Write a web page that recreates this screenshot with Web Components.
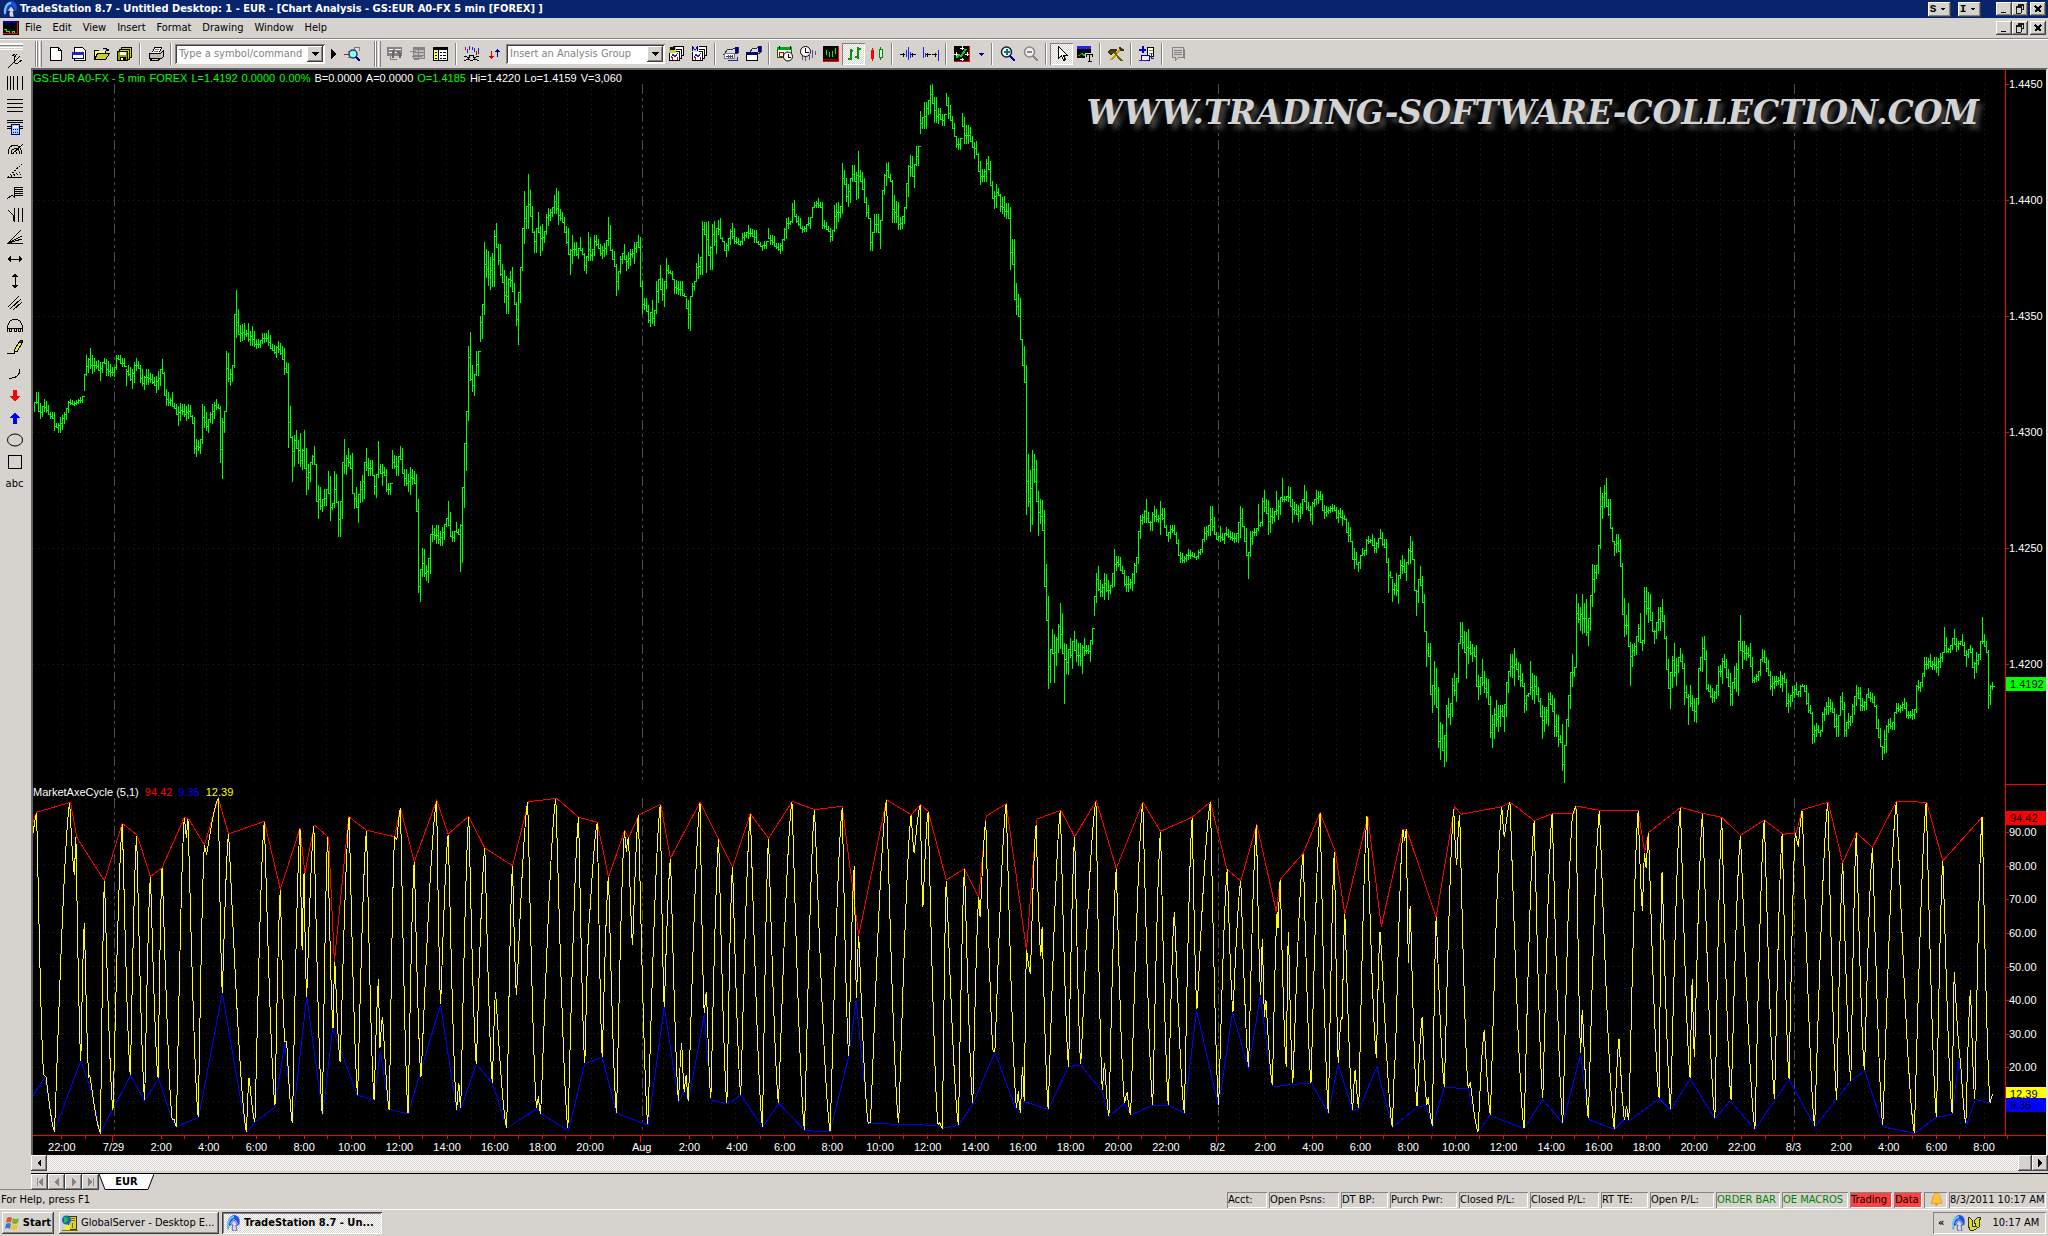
<!DOCTYPE html>
<html lang="en">
<head>
<meta charset="utf-8">
<title>TradeStation 8.7 - Untitled Desktop: 1 - EUR</title>
<style>
html,body{margin:0;height:100%;overflow:hidden;background:#d6d3ce}
body{font:11px/14px "DejaVu Sans Condensed","DejaVu Sans",sans-serif;color:#000}
</style>
</head>
<body>
<ts-desktop></ts-desktop>
<script>
const BASE=`
*{box-sizing:border-box}
button,input,select{font:inherit;color:inherit;margin:0;padding:0;border:0;border-radius:0;background:none;min-width:0;outline:0}
button{display:flex;align-items:center;justify-content:center;white-space:nowrap}
svg{display:block}
.raised{background:#d6d3ce;box-shadow:inset -1px -1px #424142,inset 1px 1px #fff,inset -2px -2px #848284}
.hatch{background:repeating-conic-gradient(#fff 0 25%,#d6d3ce 0 50%) 0 0/2px 2px}
`;
function define(tag,css,html,init){
  const t=document.createElement('template');
  customElements.define(tag,class extends HTMLElement{
    connectedCallback(){
      if(this.shadowRoot)return;
      t.innerHTML='<style>'+BASE+css+'</style>'+(typeof html==='function'?html(this):html);
      this.attachShadow({mode:'open'}).append(t.content.cloneNode(true));
      if(init)init(this,this.shadowRoot);
    }
  });
}

/* ---------- icons, 16 x 16 ---------- */
const P=(d,s='#000',f='none',w=1)=>`<path d="${d}" stroke="${s}" fill="${f}" stroke-width="${w}"/>`;
const R=(x,y,w,h,f)=>`<rect x="${x}" y="${y}" width="${w}" height="${h}" fill="${f}"/>`;
const tsLogo=`<g shape-rendering="auto"><path d="M3 15C1 9 3 1 9 0c5 0 7 5 5 11l-2-4-3-3-3 3z" fill="#1c50e8"/><path d="M3 13C2 7 5 2 9 2" stroke="#6cc8ff" fill="none" stroke-width="2"/><path d="M9 5l4 5h-2l1 6H8l-1-3 1-3H5z" fill="#cfd8f0" stroke="#102070" stroke-width=".6"/></g>`;
const cells=(x,y)=>R(x,y,11,10,'#fff')+P(`M${x+.5} ${y+.5}h10v9h-10z`);
const ICONS={
 logo:tsLogo,
 chart:R(0,1,16,14,'#000')+R(0,1,14,2,'#00c')+P('M1 9.500h2v2h3v2h3v-2h2v1','#0f0')+P('M14.500 2v11H0','#f00'),
 fresh:P('M2.500 1.500h8l3 3v10h-11z','#000','#fff')+P('M10.500 1.500v3h3'),
 window:P('M3.500 1.500h8l3 3v10h-11z','#000','#fff')+R(1,6,11,7,'#fff')+P('M1.500 6.500h11v6h-11z','#008')+R(1,6,12,3,'#22c'),
 open:P('M.5 13.500v-9h4l1 1h6v3')+R(1,5,10,8,'#ff6')+P('M.5 13.500l3-6h12l-4 6z','#000','#cc3')+P('M9 2.500h3l2 2m0-2v2h-2'),
 saveall:P('M4.500 1.500h10v10h-10z','#000','#cc3')+P('M2.500 3.500h10v10h-10z','#000','#cc3')+P('M.5 5.500h10v9h-10z','#000','#990')+R(3,6,6,3,'#fff')+R(3,11,6,4,'#000')+R(4,12,2,2,'#fff'),
 print:P('M4.500 6.500l2-5h7l-2 5','#000','#fff')+P('M1.500 7.500h12v5h-12z','#000','#bbb')+P('M13 7l2-2v6l-2 2M3.500 12.500h8l-1 2h-8z','#000','#ccc')+P('M7 3.500h4M6 5.500h4','#777')+R(10,10,2,1,'#cc0'),
 play:P('M6 3v10l5-5z','none','#000'),
 find:P('M0 8h3m1-3h6V1h5v4m-9 0h4v6H5z','#777','#ddd')+P('M0 8.500h5','#a22')+`<g shape-rendering="auto"><circle cx="9" cy="8" r="4" fill="#8ff" stroke="#245" stroke-width="1.500"/></g>`+P('M12 11l4 4','#008','none',2),
 g1:R(0,1,15,9,'#848284')+P('M2 3.500h4m2 0h6M2 6.500h4m2 0h4','#fff')+P('M6 4v8m4-6c4 0 3 3 3 6','#666','none',2)+P('M3.500 10v3h6','#848284'),
 g2:P('M3.500 1.500h11v11h-11z','#848284','#bbb')+R(4,1,11,3,'#848284')+P('M4 6.500h11M4 9.500h11M8.500 4v9','#848284')+P('M0 5.500h6M2 10.500h10M4 13.500h5','#848284'),
 grid:P('M.5 1.500h14v13H.5z','#000','#fff')+R(0,1,15,3,'#000')+R(1,4,4,10,'#ff6')+P('M5.500 4v10M10 6.500h3M7 6.500h2M10 9.500h3M7 9.500h2M7 12.500h2M10 12.500h3M2 6.500h2M2 9.500h2M2 12.500h2'),
 study:P('M1.500 1v3M12.500 5v4','#c00')+P('M3.500 3v4M5.500 0v4M8.500 1v3M10.500 2v4M14.500 2v6','#22c')+P('M0 14.500l4-1 2-4h3l2 4 4 1M0 10l3 1 3 3h3l3-3 3-1'),
 updown:P('M4.500 5v8M2 10.500h5M3 11.500h3','#c00')+P('M10.500 3v8M8 5.500h5M9 4.500h3','#008'),
 grp1:cells(4,0)+cells(2,3)+cells(0,5)+R(0,1,7,6,'#cc3')+R(1,1,5,3,'#000')+P('M2 12l2-4 2 3 3-4','#22c')+P('M3.500 11v3M8.500 11v3','#c00'),
 grp2:cells(4,0)+cells(2,3)+cells(0,5)+R(0,0,7,6,'#d6d3ce')+P('M.5 5V1l2.500 3L5.500 1v4','#008')+P('M2 12l2-4 2 3 3-4','#22c')+P('M3.500 11v3M8.500 11v3','#c00'),
 fmt1:P('M1 8l4-5h5l5-1v5l-4 1H3z','#333','#ddd')+P('M13.500 1v6','#008','none',3)+P('M1.500 7.500h10v5h-10z','#777','#fff')+P('M3 10.500h6m-4 4h9v-4','#22a')+P('M5 12V9m2 3V9m2 3V9','#555'),
 fmt2:P('M4 6l3-4h4l4-1v5l-3 2H5z','#333','#ddd')+P('M13.500 0v6','#008','none',3)+P('M.5 6.500h11v8H.5z','#000','#fff')+R(0,6,12,3,'#008'),
 time1:P('M.5 1.500h14v10H.5z','#060','#fff')+R(0,1,15,3,'#0a0')+P('M2 6h4v4H2z','#c00')+`<g shape-rendering="auto"><circle cx="11" cy="10.500" r="4.500" fill="#fff" stroke="#000"/></g>`+P('M11 8v3h3M2 0v3M13 0v3'),
 time2:`<g shape-rendering="auto"><circle cx="5.500" cy="5.500" r="5" fill="#fff" stroke="#000"/></g>`+P('M5.500 2v4h3')+P('M2.500 10v4M5.500 11v4M9.500 8v6M12.500 4v8M15.500 5v4','#558','none',1),
 bars:R(0,0,16,16,'#000')+P('M3.500 4v5M6.500 6v5M9.500 5v6M12.500 2v6','#0f0')+P('M15.500 0v15.500H0','#f00','none')+P('M0 13.500h14','#a00'),
 ohlc:P('M4.500 3v11M2 12.500h3M4 4.500h3M11.500 1v12M9 10.500h3M12 2.500h3','#090','none',2),
 candle:R(2,4,3,9,'#f00')+P('M3.500 2v13','#f00')+P('M11.500 1v13','#080')+P('M10.500 3.500h3v8h-3z','#080','#dfd'),
 narrow:P('M8.500 1v13M10.500 6v6','#22e')+P('M6.500 4v7','#22e')+P('M0 8.500h5M3.500 6.500v4M11 8.500h5M12.500 6.500v4'),
 wide:P('M.5 1v11M15.500 4v11','#22e')+P('M3 8.500h5M4.500 6.500v4M9 8.500h5M12.500 6.500v4')+P('M2.500 7v4','#22e'),
 fit:R(0,0,16,16,'#000')+P('M2 12l3-3 2 1 5-7','#0d0','none',2)+P('M8 0v4M6 2.500h4M8 12v4M6 13.500h4M0 8h4M2.500 6v4M11 8h4M13.500 6v4','#fff')+P('M15.500 0v15.500H0','#f00'),
 drop:P('M2 6h12l-6 6z','none','#008'),
 zin:`<g shape-rendering="auto"><circle cx="6.500" cy="6" r="5" fill="#fff" stroke="#123" stroke-width="1.500"/></g>`+P('M6.500 3v6M3.500 6h6','#077','none',2)+P('M10 10l5 5','#008','none',2),
 zout:`<g shape-rendering="auto"><circle cx="6.500" cy="6" r="5" fill="#eee" stroke="#888" stroke-width="1.500"/></g>`+P('M4 6h5','#888','none',2)+P('M10 10l5 5','#888','none',2),
 ptr:P('M4.500 .5v12l3-3 2 5 2-1-2-4h4z','#000','#fff'),
 ttool:R(0,0,14,12,'#000')+R(0,0,14,3,'#22f')+P('M1 9h2l2-2 2 3 2-3h2','#0c0')+R(8,7,8,9,'#d6d3ce')+P('M9 8.500h7M9 8v3M15.500 8v3M12.500 8v7M11 15h4','#000'),
 hammer:P('M3 14L14 2','#c90','none',2)+P('M5 5l9 10','#660','none',2)+P('M0 6l3-3h4l2 1-3 2-3 3z','#330','#441')+P('M12 1l1 3h3','#333','none',2),
 wiz:P('M3.500 0v7M0 3.500h7','#00c','none',2)+P('M8.500 1.500h6v9h-6z','#000','#fff')+P('M10 4.500h4m-4 3h4','#990')+P('M2.500 9.500h8v5h-8z','#008','#eef')+P('M0 14.500h8M12 7v5h3','#22a'),
 note:P('M2.500 1.500h11v10h-5l-3 3v-3h-3z','#848284','#ccc')+P('M4 4.500h8M4 6.500h8M4 8.500h8M14.500 3v10','#848284'),
 fork:P('M1 15l6-6M9.500 1L7 5v3l1 2h3l4-3M5 3l3-2M13 3L7 9'),
 vlines:P('M.5 1v14M3.500 1v14M6.500 1v14M10.500 1v14M15.500 1v14'),
 hlines:P('M0 2.500h16M0 6.500h16M0 10.500h16M0 14.500h16'),
 calc:P('M0 1.500h16M0 3.500h16M0 7.500h16M0 9.500h16')+P('M4.500 5.500h8v10h-8z','#006','#a8d0ff')+R(6,7,5,2,'#fff')+R(6,10,1,1,'#008')+R(8,10,1,1,'#008')+R(10,10,1,1,'#008')+R(6,13,1,1,'#008')+R(8,13,1,1,'#008')+R(10,13,1,1,'#008'),
 arcs:P('M1 13c0-12 13-12 14 0M4 13c0-7 8-7 9 0M6 13c0-3 4-3 4 0M5 13L16 3'),
 fan:P('M0 14.500h15')+`<path d="M1 14L15 1M1 14L15 8M1 14l14-3" stroke="#000" stroke-dasharray="1.500 1.500" fill="none"/>`,
 fib:P('M0 14l5-4 2 2V2M8 2.500h8M8 4.500h8M8 6.500h8M8 8.500h8M8 10.500h8'),
 vfib:P('M1 3l5 5v6M7.500 1v14M11.500 1v14M15.500 1v14'),
 speed:P('M1 14L14 1M1 14L15 7M1 14l14-4M0 14.500h16'),
 hor:P('M2 8h12')+P('M0 8l4-3v6zM16 8l-4-3v6z','none','#000'),
 ver:P('M8 2v12')+P('M8 0L5 4h6zM8 16l-3-4h6z','none','#000'),
 par:P('M1 12L12 1M3 14L14 4M6 15L15 7'),
 cyc:P('M.5 15v-4C1 -1 15 -1 15.500 11v4M.5 11.500h15M2.500 12v2h2v-2M7 12v2h2v-2M11.500 12v2h2v-2'),
 pen:P('M0 14.500h7l1-3')+P('M7 12L12 3l3 1-5 9z','#000','#ee3')+P('M12 3l2-2 2 1-1 2z','#000','#b22'),
 arc:P('M2 12c7 1 11-3 11-9'),
 down:P('M6 2h4v6h3l-5 6-5-6h3z','none','#f00'),
 up:P('M6 14h4V8h3L8 2 3 8h3z','none','#00f'),
 oval:`<g shape-rendering="auto"><ellipse cx="8" cy="8" rx="7.500" ry="6" fill="none" stroke="#000"/></g>`,
 rect:P('M1.500 1.500h13v13h-13z'),
 flag:`<g shape-rendering="auto"><path d="M2 3q3-2 5 0L6 8Q3 6 1 8z" fill="#e5532d"/><path d="M8 3q3 2 6 0l-1 5q-3 2-6 0z" fill="#6fb33b"/><path d="M1 9q3-2 5 0l-1 5q-3-2-5 0z" fill="#3a75d6"/><path d="M7 9q3 2 6 0l-1 5q-3 2-6 0z" fill="#f4c52b"/></g>`,
 server:P('M6.500 1.500h8v13h-8z','#330','#dc3')+P('M8 3.500h5M8 5.500h5M10 8v5','#770')+`<g shape-rendering="auto"><circle cx="4.500" cy="5" r="4.500" fill="#1663c8"/><path d="M2 2l4 1-1 4-3 1z" fill="#1c2"/></g>`+R(3,10,5,5,'#ee3')+P('M0 15.500h16','#770'),
 bell:`<g shape-rendering="auto"><path d="M8 1c5 1 4 7 6 11H2C5 8 3 2 8 1z" fill="#ffc43a" stroke="#d98a10" stroke-width=".7"/><circle cx="8" cy="13.500" r="1.500" fill="#e09a20"/></g>`,
 snake:P('M2 2l3 3v6h4l-2-5 4-4 3 1-2 3v6l-5 3H3l-2-5z','#332','#dd2'),
 left:P('M10 4v8L6 8z','none','#000'),right:P('M6 4v8l4-4z','none','#000'),caret:P('M4 6h8l-4 4z','none','#000'),
 nfirst:P('M5.500 3v9','#848284')+P('M11 3v10L6 8z','none','#848284'),nprev:P('M10 3v10L5 8z','none','#848284'),
 nnext:P('M6 3v10l5-5z','none','#848284'),nlast:P('M10.500 3v9','#848284')+P('M5 3v10l5-5z','none','#848284'),
 min:R(4,11,6,2,'#000'),restore:P('M6 3.500h7M6.500 3v3M12.500 3v6M10 8.500h3M3 6.500h7M3.500 6v7h6V6','#000')+P('M6 2.500h7M3 5.500h7'),close:P('M4 4l8 8M12 4l-8 8','#000','none',2)
};
const svg=(n,s=16)=>`<svg width="${s}" height="${s}" viewBox="0 0 16 16" shape-rendering="crispEdges" aria-hidden="true">${ICONS[n]}</svg>`;

define('ts-icon',':host{display:block;flex:none}',el=>svg(el.getAttribute('name'),el.getAttribute('size')||16));

define('tool-button',`
:host{display:block;flex:none;width:23px}
:host([slim]){width:15px}
button{width:100%;height:22px;overflow:hidden}
:host([on]) button{box-shadow:inset 1px 1px #848284,inset -1px -1px #fff}
svg{flex:none}`,
 el=>`<button class="${el.hasAttribute('on')?'hatch':''}" aria-label="${el.getAttribute('label')||el.getAttribute('icon')}">${svg(el.getAttribute('icon'),el.getAttribute('icon')==='drop'?8:16)}</button>`);

define('win-buttons',`
:host{display:flex;gap:2px}
div{display:flex}
button{width:16px;height:14px}`,
`<div><button class="raised" aria-label="Minimize">${svg('min',14)}</button><button class="raised" aria-label="Restore">${svg('restore',14)}</button></div><button class="raised" aria-label="Close">${svg('close',12)}</button>`);

define('title-bar',`
:host{display:flex;align-items:center;height:18px;padding:0 2px;background:#08246b;color:#fff;font-weight:bold}
h1{font:inherit;margin:0 auto 0 2px;white-space:nowrap}
.drops{display:flex;gap:7px;margin-right:15px}
.drops button{width:23px;height:15px;color:#000;font:bold 11px "Liberation Mono",monospace;gap:1px}`,
`<ts-icon name="logo"></ts-icon><h1>TradeStation 8.7 - Untitled Desktop: 1 - EUR - [Chart Analysis - GS:EUR A0-FX 5 min [FOREX] ]</h1>
<div class="drops"><button class="raised" aria-label="S menu">S${svg('caret',12)}</button><button class="raised" aria-label="I menu">I${svg('caret',12)}</button></div><win-buttons></win-buttons>`);

define('menu-bar',`
:host{display:flex;align-items:center;height:22px;padding:0 2px 2px 3px;border-bottom:1px solid #fff;box-shadow:inset 0 -1px #848284}
nav{display:flex;gap:11px;margin:0 auto 0 6px}`,
`<ts-icon name="chart"></ts-icon><nav>${['File','Edit','View','Insert','Format','Drawing','Window','Help'].map(m=>`<button>${m}</button>`).join('')}</nav><win-buttons></win-buttons>`);

const sep='<i class="sep"></i>',B=(n,x='')=>`<tool-button icon="${n}" ${x}></tool-button>`;
define('tool-bar',`
:host{display:flex;align-items:center;height:28px;padding-left:3px}
.grip{width:7px;height:26px;flex:none;margin:0 2px 0 1px;border:solid;border-width:0 1px;border-color:#fff #848284;background:linear-gradient(90deg,#fff 1px,#848284 1px 2px,transparent 2px 3px,#fff 3px 4px,transparent 4px)}
.sep{flex:none;width:2px;height:22px;margin:0 3px;background:linear-gradient(90deg,#848284 1px,#fff 1px)}
.combo{display:flex;height:20px;background:#fff;box-shadow:inset 1px 1px #848284,inset -1px -1px #fff,inset 2px 2px #424142;padding:2px}
.combo{flex:0 0 150px}.combo.w{flex-basis:159px}
input,select{flex:1;width:0;padding-left:2px;color:#848284;appearance:none;white-space:nowrap}
input::placeholder{color:#848284;opacity:1}
.combo button,.combo .arrow{flex:0 0 16px;display:flex;align-items:center;justify-content:center}
.gap{width:10px}`,
`<i class="grip"></i>${B('fresh')}${B('window')}${B('open')}${B('saveall')}${sep}${B('print')}${sep}
<label class="combo"><input aria-label="Symbol or command" placeholder="Type a symbol/command"><button class="raised" aria-label="Open list">${svg('caret')}</button></label>
${B('play','slim')}${B('find')}<i class="gap"></i><i class="grip"></i>${B('g1')}${B('g2')}${B('grid')}${sep}${B('study')}${B('updown')}
<label class="combo w"><select aria-label="Analysis group"><option>Insert an Analysis Group</option></select><span class="arrow raised">${svg('caret')}</span></label>
${B('grp1')}${B('grp2')}${sep}${B('fmt1')}${B('fmt2')}${sep}${B('time1')}${B('time2')}${B('bars')}${B('ohlc','on')}${B('candle')}${sep}${B('narrow')}${B('wide')}${sep}${B('fit')}${B('drop','slim')}${sep}${B('zin')}${B('zout')}${sep}${B('ptr','on')}${B('ttool')}${sep}${B('hammer')}${sep}${B('wiz')}${sep}${B('note')}`);

define('draw-rail',`
:host{display:flex;flex-direction:column;align-items:flex-start;width:31px;flex:none;padding-top:3px;border-bottom:1px solid #848284}
.grip{width:23px;height:7px;flex:none;border:solid;border-width:1px 0;border-color:#fff #848284;background:linear-gradient(#fff 1px,#848284 1px 2px,transparent 2px 3px,#fff 3px 4px,transparent 4px)}
tool-button{margin-left:3px}
.arc{margin-top:5px}
.abc{width:23px;height:22px;margin-left:3px}`,
`<i class="grip"></i>${['fork','vlines','hlines','calc','arcs','fan','fib','vfib','speed','hor','ver','par','cyc','pen'].map(n=>B(n)).join('')}${B('arc','class="arc"')}${['down','up','oval','rect'].map(n=>B(n)).join('')}<button class="abc">abc</button>`);

/* ---------- chart data: [origin x, x per unit, origin y, y per unit, samples] ---------- */
const PRICE=[
[30,2.376,60,2.8,`11 957 985 15 930 962 19 930 985 25 960 1005 30 968 1000 35 948 985 44 965 995 50 985 1005 58 985 1040 63 1015 1030 68 1015 1043 73 1000 1043 82 985 1020 91 955 988 96 948 965 106 955 970 112 948 962 122 942 960 129 880 928 134 827 885 139 835 875 144 805 865 149 825 880 155 842 865 163 840 870 168 845 900 172 845 875 178 835 850 182 838 885 191 850 887 197 860 885 201 860 887 206 827 868 211 827 840 216 827 850 221 835 860 226 850 895 229 865 912 234 855 885 243 865 920 249 845 905 253 835 870 258 842 865 263 855 905 272 885 925 278 865 910 287 875 905 296 887 912 301 885 932 306 870 925 310 865 912 315 838 880 320 873 940 325 920 970 333 945 970 338 930 972 343 960 978 350 965 1005 353 970 1025 358 960 1010 363 962 995 372 970 1012 377 962 1005 382 965 1000 387 995 1018 391 1000 1102 396 1060 1112 401 1065 1095 405 1060 1102 410 962 1075 415 970 1030 420 985 1038 425 1005 1043 429 985 1015 434 962 1018 443 948 980 449 962 978 453 968 1128 457 1002 1172 462 982 1045 467 815 985 472 820 902 476 865 912 481 855 902 486 710 862 490 643 778 495 697 770 500 742 790 509 735 785 514 755 775 519 735 790 524 760 800 529 745 800 538 780 808 548 785 805 553 765 795 562 765 790 567 755 800 571 770 808 577 795 815 585 800 835 591 787 820 600 800 840 605 805 882 610 845 875 614 847 1085 619 968 1058 623 1053 1182 628 1050 1140 633 1035 1090 638 1065 1130 643 1045 1140 648 1090 1148 652 1035 1145 657 1085 1218 662 1130 1205 667 1125 1182 672 1105 1135 676 1080 1135 681 1130 1237 686 1190 1285 691 1195 1260 696 1230 1265 701 1200 1250 709 1150 1215 714 1165 1290 719 1240 1260 724 1150 1255 729 1158 1240 733 1235 1335 738 1235 1335 743 1125 1285 747 1060 1160 752 1105 1162 757 1085 1140 761 1105 1145 766 1100 1215 771 1215 1258 776 1195 1255 780 1215 1295 786 1180 1240 795 1125 1230 800 1085 1150 805 1115 1165 810 1120 1165 818 1165 1218 823 1160 1225 828 1067 1170 833 1130 1160 838 1130 1192 843 1140 1165 848 1145 1210 853 1185 1218 858 1140 1195 862 1092 1145 867 1105 1145 872 1110 1165 877 1105 1150 881 1080 1120 886 1085 1160 891 1145 1192 896 1160 1210 905 1140 1218 910 1145 1190 914 1150 1188 919 1160 1265 923 1230 1492 928 1425 1518 933 1365 1448 938 1370 1448 943 1415 1460 948 1395 1465 952 1328 1440 957 1302 1350 962 1310 1345 967 1302 1355 972 1320 1360 977 1308 1360 982 1300 1345 987 1283 1308 991 1275 1308 994 1235 1305 999 1265 1335 1005 1320 1350 1010 1302 1355 1014 1293 1325 1019 1313 1330 1023 1300 1433 1028 1195 1408 1033 1072 1255 1038 982 1150 1043 800 1010 1047 762 900 1051 855 930 1056 880 940 1062 815 885 1067 782 842 1071 717 790 1076 682 782 1080 510 715 1085 530 610 1090 535 632 1095 552 645 1099 540 635 1104 475 635 1108 455 525 1113 515 575 1118 515 605 1123 570 625 1127 588 680 1133 605 712 1138 610 712 1142 590 635 1147 580 650 1152 625 685 1157 678 745 1160 650 797 1166 580 680 1170 470 590 1175 367 515 1180 410 472 1185 318 472 1190 365 440 1195 408 485 1199 480 540 1204 470 540 1208 425 485 1213 465 550 1218 460 535 1223 480 512 1228 430 490 1232 415 465 1237 417 450 1242 412 440 1247 378 430 1251 357 430 1256 367 463 1261 417 450 1266 425 455 1271 440 485 1276 465 515 1280 470 545 1285 530 602 1289 490 570 1295 510 550 1300 525 557 1305 495 535 1310 525 545 1315 540 590 1320 548 600 1325 482 562 1330 495 562 1335 530 562 1341 490 550 1346 490 520 1351 500 530 1356 515 550 1361 520 558 1367 505 545 1375 440 520 1380 462 535 1385 530 560 1390 535 580 1394 570 660 1398 590 645 1403 548 600 1408 540 570 1413 515 560 1418 545 590 1424 528 577 1428 530 555 1433 530 555 1437 510 570 1442 510 540 1447 490 525 1451 495 635 1455 620 712 1460 665 700 1465 665 705 1470 685 735 1475 705 748 1479 672 740 1484 700 745 1488 620 712 1493 612 680 1498 575 645 1503 610 675 1508 618 692 1512 555 640 1517 575 600 1522 588 600 1527 590 615 1532 615 655 1537 615 655 1542 620 658`],
[680,2.376,60,2.376,`0 525 560 5 525 560 10 553 562 15 565 592 20 570 640 25 560 643 30 530 562 35 525 548 39 482 525 44 460 520 49 468 510 54 382 510 58 385 415 63 385 505 67 382 465 72 442 498 77 390 500 82 382 442 87 400 460 91 380 415 96 375 425 101 420 432 106 430 455 110 435 467 115 422 455 120 402 440 125 388 425 130 398 438 135 420 438 143 430 442 149 410 440 155 408 422 162 392 425 168 400 420 173 402 420 178 405 435 187 430 440 197 440 455 202 430 450 210 400 425 216 415 440 222 418 445 228 435 450 238 435 460 244 425 455 249 400 430 254 375 425 258 372 402 263 382 392 268 340 388 270 333 372 276 365 388 282 370 395 287 375 402 292 395 410 301 390 408 306 372 395 311 372 402 316 350 375 320 338 352 329 328 352 335 338 352 339 338 402 344 380 402 353 395 408 359 400 432 363 405 430 367 345 408 372 340 402 377 338 385 382 348 375 386 245 365 391 262 298 396 280 338 401 295 350 405 280 340 410 250 290 415 250 290 420 265 333 425 217 330 430 262 290 434 265 310 439 280 340 444 325 372 449 345 378 453 375 455 458 408 455 463 365 412 468 365 410 473 370 408 477 380 450 481 310 380 487 270 320 491 245 300 495 242 280 500 270 290 505 285 388 510 320 388 515 335 388 520 338 405 525 372 405 529 370 402 534 350 390 539 292 355 544 250 325 548 225 278 553 228 278 558 248 305 563 205 252 568 158 212 572 120 175 577 135 165 582 100 165 587 95 130 592 60 128 597 58 105 601 98 108 606 88 150 611 90 120 615 115 152 620 115 142 625 128 158 630 88 158 634 78 110 638 88 140 643 108 145 648 132 165 653 150 182 658 180 208 663 185 213 668 160 185 672 125 160 677 135 200 682 155 200 687 160 195 692 180 208 697 195 235 701 205 235 705 192 225 710 222 265 715 240 298 720 258 290 725 235 290 730 228 262 735 240 300 739 288 330 744 312 355 749 295 352 754 305 322 759 318 362 763 325 365 768 322 372 772 338 385 777 340 378 782 342 372 785 350 500 790 425 488 795 425 570 800 530 605 805 555 610 810 565 665 814 665 727 819 680 768 824 725 1082 829 935 1062 834 975 1122 838 927 1105 843 935 1005 848 950 1050 853 1025 1132 857 1042 1102 862 1045 1118 866 1070 1252 871 1197 1332 875 1273 1495 880 1400 1480 886 1352 1412 891 1365 1480 895 1370 1440 900 1340 1410 905 1290 1400 909 1313 1412 914 1385 1530 919 1388 1460 923 1400 1462 928 1373 1420 933 1380 1447 938 1357 1405 943 1375 1430 948 1385 1440 953 1405 1452 957 1390 1458 962 1373 1415 967 1390 1412 972 1378 1430 977 1350 1390 981 1290 1362 986 1273 1320 990 1218 1290 994 1202 1262 999 1235 1275 1004 1245 1275 1009 1218 1282 1014 1222 1265 1019 1235 1282 1024 1248 1268 1028 1218 1255 1033 1163 1252 1038 1178 1215 1042 1178 1205 1047 1180 1215 1052 1202 1222 1056 1212 1250 1062 1225 1265 1067 1232 1258 1072 1218 1262 1077 1228 1260 1080 1195 1245 1085 1180 1218 1090 1120 1198 1094 1080 1138 1099 1078 1105 1104 1070 1100 1108 1042 1100 1113 1075 1100 1118 1095 1118 1123 1073 1118 1128 1060 1098 1137 1080 1100 1141 1047 1128 1146 1065 1092 1151 1065 1112 1156 1105 1132 1161 1122 1145 1166 1105 1138 1170 1105 1125 1175 1105 1128 1180 1122 1150 1185 1138 1178 1190 1170 1195 1199 1178 1195 1208 1163 1188 1218 1168 1180 1227 1178 1188 1232 1165 1185 1237 1162 1175 1242 1138 1172 1247 1110 1145 1255 1105 1130 1260 1060 1130 1265 1060 1120 1270 1085 1128 1275 1122 1140 1280 1130 1142 1285 1108 1145 1290 1125 1142 1294 1125 1150 1299 1110 1132 1308 1120 1140 1318 1125 1148 1323 1125 1145 1328 1098 1148 1333 1060 1135 1337 1065 1110 1342 1108 1145 1346 1112 1178 1351 1168 1232 1356 1120 1180 1361 1118 1152 1366 1112 1132 1375 1055 1120 1380 1098 1110 1384 1040 1108 1389 1022 1075 1394 1042 1078 1399 1045 1128 1404 1065 1125 1409 1065 1102 1413 1072 1098 1418 1025 1080 1423 1045 1092 1428 1038 1082 1432 993 1050 1437 1035 1050 1442 1037 1048 1446 1013 1050 1451 1015 1062 1456 1042 1100 1461 1050 1080 1466 1055 1080 1470 1058 1098 1475 1052 1090 1480 1042 1078 1484 1010 1050 1489 1025 1070 1494 1050 1072 1499 1060 1095 1503 1050 1105 1508 1042 1062 1513 1022 1058 1522 1025 1045 1527 1032 1072 1532 1058 1090 1541 1062 1078 1550 1055 1075 1556 1058 1072 1560 1062 1090 1565 1070 1100`],
[1300,2.096,440,3,`85 205 235 89 210 258 93 225 240 97 235 278 101 245 305 105 262 305 110 303 360 114 325 388 118 335 375 122 365 395 127 345 388 131 325 348 135 330 348 139 297 345 144 288 312 148 297 310 152 282 318 156 295 338 160 305 338 165 295 325 169 267 297 173 277 318 177 297 325 181 297 368 185 355 460 190 392 415 194 418 485 198 430 465 202 398 468 206 405 492 211 360 418 215 345 403 219 358 400 223 365 423 227 325 375 232 288 372 236 302 360 240 358 452 244 450 528 249 418 490 253 378 438 257 408 490 261 462 575 265 572 680 269 610 652 274 610 765 278 735 818 282 662 795 286 683 805 290 742 925 294 845 960 299 852 932 303 885 980 307 795 965 312 775 835 316 788 855 320 715 832 324 698 768 328 715 785 332 608 730 336 545 612 341 545 628 345 572 640 349 575 718 353 567 672 357 602 645 362 612 665 366 620 650 370 615 740 374 705 780 379 710 765 383 657 738 387 692 758 391 715 775 395 718 795 399 768 895 403 825 925 407 805 898 412 780 862 416 795 875 420 795 862 425 795 830 429 792 875 433 725 832 437 692 760 441 642 710 445 642 715 450 623 738 454 655 690 458 665 720 463 672 740 467 698 740 471 730 818 475 765 812 479 758 772 483 662 765 487 700 780 492 705 792 496 708 765 500 740 785 504 775 830 508 795 897 513 802 875 517 802 852 521 758 858 525 755 795 530 765 815 534 775 890 538 822 892 542 825 922 546 885 910 550 852 992 554 915 1028 559 838 918 563 765 862 568 695 808 572 642 740 576 680 712 580 462 683 584 490 550 588 502 572 593 462 582 597 490 578 601 477 588 605 535 618 609 465 572 613 372 500 617 375 460 622 375 418 626 315 402 630 140 328 634 160 238 638 135 205 642 113 200 647 177 228 651 177 268 655 262 305 659 302 348 663 282 340 668 282 335 672 297 382 676 370 525 680 475 590 684 525 585 688 488 620 693 605 738 697 612 682 701 610 648 705 587 645 709 552 605 714 518 608 718 600 632 722 440 612 726 440 525 731 455 548 735 462 542 739 515 575 743 570 612 747 545 598 752 502 572 756 500 572 760 477 545 764 525 598 768 588 690 773 658 748 777 695 808 781 648 745 785 608 712 789 655 738 794 652 700 798 623 665 802 642 688 806 670 795 810 735 775 814 762 855 818 735 800 823 765 812 827 775 845 831 775 850 835 685 795 839 650 692 844 592 695 848 587 660 852 630 750 856 732 755 860 735 775 865 745 788 869 752 785 873 735 778 877 678 768 881 675 712 886 655 732 890 642 685 894 658 715 898 688 740 902 698 798 906 725 798 911 678 748 915 668 755 919 602 768 923 525 632 928 602 688 932 602 660 936 615 662 940 622 655 944 608 682 949 652 728 953 710 730 957 702 725 961 692 722 965 658 708 969 628 665 974 630 668 978 650 695 982 660 708 986 692 750 990 708 768 995 708 748 999 708 738 1003 712 735 1007 692 745 1011 705 755 1015 700 728 1020 718 800 1024 760 818 1028 765 800 1032 738 785 1036 735 775 1041 725 765 1045 752 772 1049 735 772 1053 732 742 1057 735 755 1062 735 795 1066 758 820 1070 795 822 1074 815 912 1079 855 908 1083 850 890 1087 855 880 1091 870 892 1095 815 875 1100 800 842 1104 785 825 1108 772 825 1112 778 815 1116 785 820 1121 805 865 1125 822 890 1129 825 892 1133 768 828 1137 755 810 1141 785 890 1146 845 890 1150 818 868 1154 828 858 1158 792 850 1162 768 825 1166 735 798 1171 742 778 1175 742 812 1179 775 812 1183 782 812 1187 762 810 1191 745 775 1196 755 785 1200 758 790 1204 767 800 1208 795 868 1212 838 895 1216 865 922 1221 920 960 1225 870 942 1229 855 938 1233 838 878 1238 835 868 1242 845 870 1246 815 870 1250 790 822 1254 790 815 1259 795 820 1263 785 812 1267 775 808 1271 785 835 1275 812 838 1279 812 835 1284 808 840 1288 808 838 1292 735 820 1296 720 752 1301 725 755 1305 700 742 1309 652 710 1313 650 690 1317 655 688 1321 642 680 1326 662 690 1330 650 690 1334 652 698 1338 655 708 1342 640 685 1347 635 665 1351 560 640 1355 592 640 1359 625 640 1363 615 640 1367 595 630 1372 567 615 1376 595 635 1380 602 630 1385 602 615 1389 582 618 1393 605 648 1397 630 680 1401 628 655 1406 615 640 1410 625 685 1414 665 718 1418 635 698 1422 642 675 1426 602 660 1431 530 612 1435 582 620 1439 602 640 1443 630 808 1447 735 795 1451 725 750`]];
const LINES={
upper:[
[0,2.24,`74 125 82 97 158 67 172 172 234 303 274 130 307 165 337 290 363 263 413 112 423 118 458 195 489 55 512 162 592 124 628 328 672 145 683 280 704 135 736 172 749 545 781 110 821 151 884 170 897 83 928 245 978 61 1004 162 1050 109 1086 204 1148 257 1184 65 1247 55 1296 112 1338 127 1363 292 1399 152 1408 173 1432 104 1480 73 1502 235`],
[700,2.306,`0 67 43 178 75 262 116 101 158 175 213 64 264 89 328 79 366 467 430 59 487 104 508 74 526 94 568 300 610 266 643 352 660 108 706 71 753 510 776 118 832 91 864 170 914 62 960 266 1021 67 1062 154 1135 112 1177 65 1215 268 1247 303 1284 133 1329 395 1338 298 1391 220 1430 98 1465 215 1487 403 1540 108`],
[1380,2.347,`3 440 54 148 63 150 132 412 175 80 190 103 286 80 306 67 362 122 405 101 455 101 460 78 515 91 606 92 621 215 630 158 706 82 757 100 802 112 846 166 902 120 946 163 977 158 991 89 1052 67 1086 248 1118 158 1156 202 1212 64 1283 67 1321 243 1414 110`]],
lower:[
[0,2.24,`74 947 100 893 122 1053 181 842 206 940 225 1058 292 887 324 962 355 895 388 1028 396 1040 445 1012 498 640 552 1058 572 1025 616 982 638 787 655 1030 687 650 723 1005 745 745 800 945 838 960 852 812 871 988 914 1002 987 674 1023 992 1032 988 1067 852 1104 912 1135 1045 1203 985 1213 1002 1273 1052 1310 852 1349 832 1381 1000 1452 1035 1488 680 1520 965 1533 930 1542 962`],
[700,2.306,`0 775 10 703 25 960 62 972 95 946 144 1042 182 970 242 1052 300 1055 343 830 360 660 388 1030 458 1033 545 1036 560 1045 596 1036 629 972 680 817 728 985 738 1000 748 965 803 988 850 860 878 855 928 935 943 1010 979 970 994 1005 1044 976 1081 976 1117 1000 1145 690 1196 980 1228 697 1265 868 1292 647 1320 921 1367 913 1410 910 1449 1000 1472 852 1505 992 1520 987 1561 860`],
[1380,2.347,`0 900 29 1042 88 980 108 976 123 1040 151 922 207 926 230 1056 258 1006 338 1046 382 958 429 1030 471 822 489 1018 550 1048 573 1018 585 1022 655 956 682 990 728 897 786 1016 822 962 880 1048 960 898 1021 1040 1105 903 1138 872 1180 1040 1255 1060 1305 1013 1344 1003 1358 840 1377 1036 1397 958 1433 970`]],
cycle:[
[0,2.24,`74 160 82 100 98 885 103 890 122 1053 156 68 167 285 170 172 181 842 189 430 199 890 201 885 225 1058 234 303 253 990 274 132 292 885 306 168 324 960 337 290 354 893 363 265 386 1020 390 1018 395 1038 413 113 418 170 421 118 444 1010 458 195 463 222 489 56 498 638 512 162 552 1056 558 893 571 1025 592 126 616 975 628 330 638 785 642 785 655 1028 672 147 677 510 681 280 687 650 703 138 722 1003 734 172 746 745 750 545 762 845 782 112 801 945 821 152 838 960 848 598 851 805 857 710 872 990 884 170 889 180 897 84 914 1000 928 245 943 890 978 62 987 672 1004 164 1023 990 1028 910 1032 985 1050 110 1067 852 1086 204 1103 910 1110 637 1135 1045 1148 257 1157 645 1182 66 1202 985 1206 952 1211 1000 1245 56 1272 1045 1296 112 1310 850 1320 420 1338 128 1349 830 1363 290 1381 1000 1399 153 1403 210 1408 173 1417 495 1430 105 1451 1033 1479 75 1488 680 1502 236 1520 962 1527 790 1533 935 1537 885 1542 962`],
[700,2.306,`0 68 10 700 15 635 25 955 43 178 62 970 75 262 94 944 116 103 144 1040 158 177 181 968 212 65 241 1050 264 90 300 1053 328 84 343 828 356 258 361 655 366 468 388 1030 393 1028 430 60 458 1030 487 104 494 218 508 75 514 382 526 96 549 1035 553 1028 559 1044 568 303 596 1034 610 268 629 970 643 352 646 410 659 124 676 815 680 815 706 73 730 985 734 938 739 998 744 862 748 963 753 510 762 578 775 135 786 528 789 442 803 986 831 92 850 860 864 170 878 853 913 65 928 930 933 850 943 1008 960 268 979 968 985 940 993 1003 1021 68 1044 975 1062 155 1080 974 1094 397 1117 998 1135 113 1146 688 1177 67 1196 975 1216 268 1229 695 1247 303 1265 860 1283 135 1293 645 1297 478 1302 710 1305 660 1320 915 1331 397 1333 445 1338 300 1352 862 1357 457 1367 910 1391 222 1409 908 1430 100 1449 998 1463 215 1472 850 1479 712 1481 715 1487 403 1505 990 1511 870 1519 985 1538 108 1560 835`],
[1380,2.347,`0 455 3 500 29 1040 36 830 54 150 58 180 62 150 67 548 71 378 87 978 99 710 110 975 113 955 123 1035 132 412 151 920 173 88 180 255 187 105 207 924 212 908 230 1055 245 750 259 1005 286 82 292 170 305 68 338 1045 362 122 382 955 404 102 429 1028 452 105 460 80 471 820 475 690 489 1015 515 92 550 1046 561 777 574 1020 579 980 584 1020 606 93 616 392 621 220 625 265 630 160 655 953 662 277 682 988 705 83 728 895 733 598 738 832 757 102 786 1014 802 113 824 960 846 168 880 1046 902 120 926 956 944 163 960 896 975 158 982 197 991 92 1020 1038 1051 68 1072 960 1086 248 1105 903 1118 160 1137 870 1156 203 1180 1036 1212 66 1254 1058 1282 68 1306 1012 1321 243 1343 1000 1348 577 1362 838 1375 1030 1386 630 1396 958 1413 110 1432 970 1438 943`]]};
const nums=s=>s.trim().split(/\s+/).map(Number);
const points=segs=>segs.flatMap(([ox,kx,s])=>{const n=nums(s),o=[];for(let i=0;i<n.length;i+=2)o.push([ox+n[i]/kx,780+n[i+1]/3]);return o});
const poly=segs=>'M'+points(segs).map(p=>p.map(v=>v.toFixed(1)).join(' ')).join('L');
/* rising legs round off at the top, falling legs at the bottom */
function wave(segs){
  const p=points(segs);let d='M'+p[0].join(' ');
  for(let i=1;i<p.length;i++){
    const [a,b]=p[i-1],[c,e]=p[i],w=c-a,h=e-b;
    d+=`C${a+w*.2} ${b+h*.2} ${c-w*.4} ${e-h*.1} ${c} ${e}`;
  }
  return d;
}
function bars(){
  const k=PRICE.flatMap(([ox,kx,oy,ky,s])=>{const n=nums(s),o=[];for(let i=0;i<n.length;i+=3)o.push([ox+n[i]/kx,oy+n[i+1]/ky,oy+n[i+2]/ky]);return o});
  const out=[];let j=0;
  for(let x=34;x<=1992;x+=2){
    while(j<k.length-2&&k[j+1][0]<x)j++;
    const a=k[j],b=k[j+1],da=Math.abs(x-a[0]),db=Math.abs(x-b[0]);
    let r;
    if(Math.min(da,db)<=1.1)r=da<db?a:b;
    else{const t=Math.max(0,Math.min(1,(x-a[0])/(b[0]-a[0])));r=[x,a[1]+(b[1]-a[1])*t,a[2]+(b[2]-a[2])*t]}
    out.push([x,Math.round(r[1]),Math.round(r[2])]);
  }
  return out.map(([x,h,l],i)=>{
    const n=out[i+1]||[x,h,l],m=Math.round((n[1]+n[2])/2),c=Math.max(h,Math.min(l-1,m));
    return `M${x+.5} ${h}V${l}M${x+.5} ${c+.5}h2`;
  }).join('');
}
const GX=[];for(let i=0;i<82;i++)GX.push(62+i*24.03);
const DAYS=[114,642,1218,1794];
const vgrid=(y0,y1)=>`<path vector-effect="non-scaling-stroke" stroke="#202020" stroke-dasharray="1 4" fill="none" d="${GX.filter(x=>!DAYS.some(d=>Math.abs(d-x)<6)&&x<2000).map(x=>`M${Math.round(x)+.5} ${y0}V${y1}`).join('')}"/>
<path vector-effect="non-scaling-stroke" stroke="#4c4c4c" stroke-dasharray="10 4 3 4 3 4" fill="none" d="${DAYS.map(x=>`M${x+.5} ${y0}V${y1}`).join('')}"/>`;
const hgrid=ys=>`<path vector-effect="non-scaling-stroke" stroke="#202020" stroke-dasharray="1 4" fill="none" d="${ys.map(y=>`M33 ${Math.round(y)+.5}H2005`).join('')}"/>`;
const L=(d,c)=>`<path vector-effect="non-scaling-stroke" stroke="${c}" fill="none" d="${d}"/>`;
const DRAW={
 price:()=>`<svg viewBox="33 70 1972 714" preserveAspectRatio="none" shape-rendering="crispEdges">${vgrid(84,783)}${hgrid([200,316,432,548,664])}${L(bars(),'#0f0')}</svg>`,
 cycle:()=>`<svg viewBox="33 784 1972 351" preserveAspectRatio="none" shape-rendering="crispEdges">${vgrid(798,1135)}${hgrid([831,864,898,932,966,1000,1033,1067,1101])}${L(poly(LINES.lower),'#00f')}${L(poly(LINES.upper),'#f00')}${L(wave(LINES.cycle),'#ff0')}</svg>`
};

define('chart-pane',`
:host{display:flex;position:relative;min-height:0;background:#000;color:#fff;font:11px/12px "Liberation Sans",sans-serif}
:host([kind=price]){flex:714 1 0}
:host([kind=cycle]){flex:351 1 0}
.plot{flex:1;min-width:0;min-height:0;position:relative}
svg{width:100%;height:100%;position:absolute;inset:0}
.legend{position:absolute;left:0;top:2px;display:flex;gap:4px;white-space:pre}
.axis{flex:0 0 41px;display:flex;flex-direction:column;border-left:1px solid #f00;position:relative}
:host([kind=price]) .axis{padding:8px 0 10px}
:host([kind=cycle]) .axis{padding:41px 0 40px;border-top:1px solid #f00}
:host([kind=cycle]) .legend{gap:6px}
.lv{flex:1 1 0;min-height:0;display:flex}
.lv::before{content:"";width:3px;height:1px;background:#f00;margin-top:6px}
::slotted(mark){position:absolute;left:0;right:0;height:14px;line-height:14px;padding-left:4px;color:#000}`,
 el=>`<div class="plot">${DRAW[el.getAttribute('kind')]()}<div class="legend"><slot></slot></div></div><div class="axis">${el.getAttribute('levels').split(' ').map(v=>`<span class="lv">${v}</span>`).join('')}<slot name="tag"></slot></div>`);

const HOURS='22:00 7/29 2:00 4:00 6:00 8:00 10:00 12:00 14:00 16:00 18:00 20:00 Aug 2:00 4:00 6:00 8:00 10:00 12:00 14:00 16:00 18:00 20:00 22:00 8/2 2:00 4:00 6:00 8:00 10:00 12:00 14:00 16:00 18:00 20:00 22:00 8/3 2:00 4:00 6:00 8:00'.split(' ');
define('time-axis',`
:host{display:flex;height:20px;flex:none;background:#000;color:#fff;border-top:1px solid #f00;padding:0 38px 0 5px;font:11px/22px "Liberation Sans",sans-serif}
span{flex:1 1 0;text-align:center;background:linear-gradient(#f00,#f00) center top/1px 3px no-repeat,linear-gradient(#f00,#f00) right top/1px 3px no-repeat}
.day{padding-left:4px;background:linear-gradient(#f00,#f00) 26px 0/1px 6px no-repeat}`,
HOURS.map(h=>`<span class="${/[/A]/.test(h)?'day':''}">${h}</span>`).join(''));

define('scroll-strip',`
:host{display:flex;height:18px;flex:none;padding-bottom:2px}
button{width:16px;height:16px;flex:none}
.track{flex:1}.thumb{width:14px}`,
`<button class="raised" aria-label="Scroll left">${svg('left')}</button><div class="track hatch"></div><button class="raised thumb" aria-label="Scroll position"></button><button class="raised" aria-label="Scroll right">${svg('right')}</button>`);

define('sheet-tabs',`
:host{display:flex;height:17px;flex:none;border-top:1px solid #000}
.n{width:17px;height:16px}
.tab{position:relative;width:55px;height:16px;font-weight:bold}
.tab svg{position:absolute;inset:0}
.tab span{position:relative}`,
`${['nfirst','nprev','nnext','nlast'].map(n=>`<button class="n raised" aria-label="${n.slice(1)} sheet">${svg(n,14)}</button>`).join('')}
<button class="tab"><svg width="55" height="16" viewBox="0 0 55 16"><path d="M0 0L6 15.500H49L55 0" fill="#fff" stroke="#000"/></svg><span>EUR</span></button>`);

define('watermark-text',`
:host{position:absolute;top:17px;right:67px;color:#d3d3d3;font:italic bold 33px/52px "DejaVu Serif","Liberation Serif",serif;white-space:nowrap;text-shadow:5px 5px 5px #444}`,'<slot></slot>');

define('chart-window',`
:host{display:flex;flex-direction:column;flex:1;min-width:0}
.frame{flex:1;min-height:0;display:flex;flex-direction:column;position:relative;border:solid;border-width:2px 2px 0;border-color:#636163 #e8e6e3 #fff #636163}
.g{color:#0f0}.r{color:#f00}.b{color:#00f}.y{color:#ff0}
.last{top:85%;background:#0f0}
.u{top:26px;background:#f00}.c{bottom:34px;background:#ff0}.l{bottom:23px;background:#00f}`,
`<tool-bar></tool-bar><div class="frame">
<chart-pane kind="price" levels="1.4450 1.4400 1.4350 1.4300 1.4250 1.4200"><span class="g">GS:EUR A0-FX - 5 min</span><span class="g">FOREX</span><span class="g">L=1.4192</span><span class="g">0.0000</span><span class="g">0.00%</span><span>B=0.0000</span><span>A=0.0000</span><span class="g">O=1.4185</span><span>Hi=1.4220</span><span>Lo=1.4159</span><span>V=3,060</span><mark slot="tag" class="last">1.4192</mark></chart-pane>
<chart-pane kind="cycle" levels="90.00 80.00 70.00 60.00 50.00 40.00 30.00 20.00"><span>MarketAxeCycle (5,1)</span><span class="r">94.42</span><span class="b">9.35</span><span class="y">12.39</span><mark slot="tag" class="u">94.42</mark><mark slot="tag" class="c">12.39</mark><mark slot="tag" class="l">9.35</mark></chart-pane>
<time-axis></time-axis><watermark-text>WWW.TRADING-SOFTWARE-COLLECTION.COM</watermark-text></div>
<scroll-strip></scroll-strip><sheet-tabs></sheet-tabs>`.replace(/>\n</g,'><'));

const CELLS=[['Acct:',40],['Open Psns:',70],['DT BP:',47],['Purch Pwr:',67],['Closed P/L:',69],['Closed P/L:',69],['RT TE:',47],['Open P/L:',64],['ORDER BAR',64,'g'],['OE MACROS',66,'g'],['Trading',42,'r'],['Data',28,'r'],['',23,'i'],['8/3/2011 10:17 AM',97]];
define('status-bar',`
:host{display:flex;align-items:center;gap:2px;height:19px;flex:none;padding:2px 2px 1px 1px}
.help{margin-right:auto}
.c{flex:none;height:16px;padding-left:1px;line-height:15px;white-space:nowrap;box-shadow:inset 1px 1px #848284,inset -1px -1px #fff}
.g{color:#008200}.r{background:#ff4142}.i{display:flex;justify-content:center}`,
`<span class="help">For Help, press F1</span>${CELLS.map(([t,w,k])=>`<span class="c ${k||''}" style="flex-basis:${w}px">${t||svg('bell',15)}</span>`).join('')}`);

define('task-bar',`
:host{display:flex;align-items:center;height:27px;flex:none;border-top:1px solid #fff;padding:2px}
button{height:22px;gap:3px;justify-content:flex-start;padding:0 3px}
.start{width:52px;font-weight:bold;gap:2px;margin-right:5px}
.task{width:160px;margin-right:3px}
.on{font-weight:bold;box-shadow:inset 1px 1px #424142,inset -1px -1px #fff,inset 2px 2px #848284}
.tray{margin-left:auto;display:flex;align-items:center;gap:1px;width:113px;height:22px;padding-left:5px;box-shadow:inset 1px 1px #848284,inset -1px -1px #fff}
.tray b{margin-right:5px}.tray time{margin-left:8px}`,
`<button class="start raised">${svg('flag')}Start</button><button class="task raised">${svg('server')}GlobalServer - Desktop E...</button><button class="task on hatch">${svg('logo')}TradeStation 8.7 - Un...</button>
<div class="tray"><b>«</b>${svg('logo')}${svg('snake')}<time>10:17 AM</time></div>`);

define('ts-desktop',`
:host{display:flex;flex-direction:column;height:100vh}
main{flex:1;min-height:0;display:flex}`,
`<title-bar></title-bar><menu-bar></menu-bar><main><draw-rail></draw-rail><chart-window></chart-window></main><status-bar></status-bar><task-bar></task-bar>`);
</script>
</body>
</html>
